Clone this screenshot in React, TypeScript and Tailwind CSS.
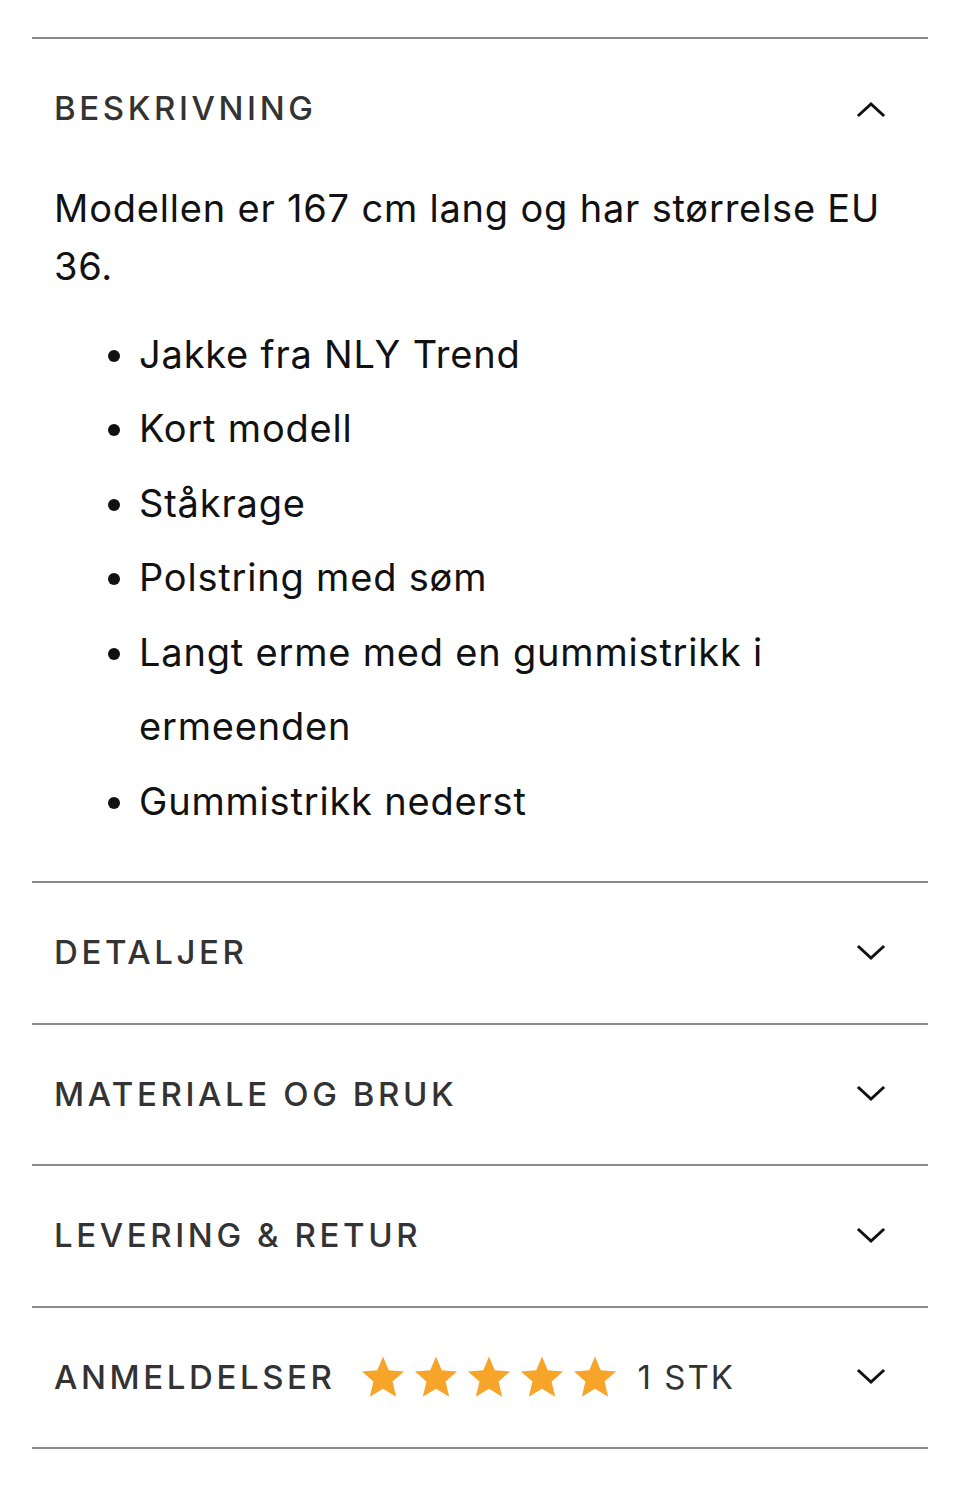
import { useState } from 'react';

const Chevron = ({ up }: { up?: boolean }) => (
    <svg width="30" height="18" viewBox="0 0 30 18" fill="none" className="shrink-0">
        <path
            d={up ? 'M3 15 L15 4 L27 15' : 'M3 3 L15 14 L27 3'}
            stroke="#111"
            strokeWidth="3"
            strokeLinecap="square"
        />
    </svg>
);

const Star = () => (
    <svg width="46" height="44" viewBox="0 0 24 23">
        <path
            d="M12 0.8 L15 8 L23 8.6 L17 13.8 L18.9 21.8 L12 17.6 L5.1 21.8 L7 13.8 L1 8.6 L9 8 Z"
            fill="#f6a42a"
        />
    </svg>
);

const bullets = [
    'Jakke fra NLY Trend',
    'Kort modell',
    'Ståkrage',
    'Polstring med søm',
    'Langt erme med en gummistrikk i ermeenden',
    'Gummistrikk nederst',
];

const Header = ({
    title,
    open,
    onClick,
    children,
}: {
    title: string;
    open?: boolean;
    onClick: () => void;
    children?: React.ReactNode;
}) => (
    <button
        onClick={onClick}
        className="w-full h-[139.5px] flex items-center pl-[22px] pr-[42px] text-left"
        style={{ fontFamily: 'Inter, sans-serif' }}
    >
        <span className="text-[33px] font-medium tracking-[3.6px] text-[#333]">{title}</span>
        {children}
        <span className="ml-auto">
            <Chevron up={open} />
        </span>
    </button>
);

export default function App() {
    const [open, setOpen] = useState<string | null>('BESKRIVNING');
    const toggle = (x: string) => setOpen((o) => (o === x ? null : x));

    return (
        <div className="bg-white min-h-[1496px] pt-[37px] px-[32px]">
            <div className="border-t-2 border-[#8a8a8a]">
                <Header title="BESKRIVNING" open={open === 'BESKRIVNING'} onClick={() => toggle('BESKRIVNING')} />
                {open === 'BESKRIVNING' && (
                    <div
                        className="pl-[22px] pr-[10px] pb-[43px] text-[#111] tracking-[0.8px]"
                        style={{ fontFamily: 'Inter, sans-serif' }}
                    >
                        <p className="text-[38px] leading-[58px]">
                            Modellen er 167 cm lang og har størrelse EU 36.
                        </p>
                        <ul className="list-disc pl-[85px] mt-[22px] text-[38px] leading-[74.5px]">
                            {bullets.map((b) => (
                                <li key={b} className="pr-[100px]">
                                    {b}
                                </li>
                            ))}
                        </ul>
                    </div>
                )}
            </div>
            {['DETALJER', 'MATERIALE OG BRUK', 'LEVERING & RETUR'].map((t) => (
                <div key={t} className="border-t-2 border-[#8a8a8a]">
                    <Header title={t} open={open === t} onClick={() => toggle(t)} />
                </div>
            ))}
            <div className="border-t-2 border-b-2 border-[#8a8a8a]">
                <Header title="ANMELDELSER" open={open === 'ANMELDELSER'} onClick={() => toggle('ANMELDELSER')}>
                    <span className="flex items-center ml-[24px] gap-[7px]">
                        {[0, 1, 2, 3, 4].map((i) => (
                            <Star key={i} />
                        ))}
                    </span>
                    <span className="ml-[20px] text-[33px] tracking-[2px] text-[#333]">1 STK</span>
                </Header>
            </div>
        </div>
    );
}
